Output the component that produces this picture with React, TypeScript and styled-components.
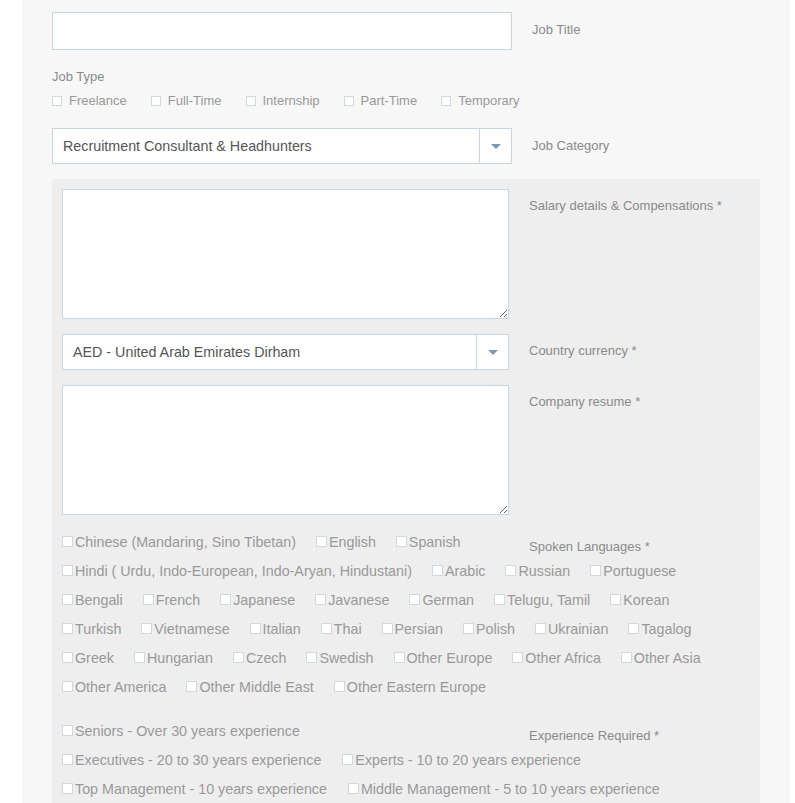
import styled, { createGlobalStyle } from "styled-components";

const GlobalStyle = createGlobalStyle`
    body {
        margin: 0;
        background: #ffffff;
        font-family: "Liberation Sans", Arial, sans-serif;
    }
`

const Page = styled.div`
    margin-left: 22px;
    width: 768px;
    min-height: 803px;
    background: #f7f7f7;
    padding: 12px 30px 0 30px;
    box-sizing: border-box;
`

const FieldRow = styled.div<{ $top?: number }>`
    display: grid;
    grid-template-columns: 460px 1fr;
    column-gap: 20px;
    align-items: center;
    margin-top: ${p => p.$top ?? 0}px;
`

const PanelRow = styled.div<{ $top?: number; $align?: string }>`
    display: grid;
    grid-template-columns: 447px 1fr;
    column-gap: 20px;
    align-items: ${p => p.$align ?? "center"};
    margin-top: ${p => p.$top ?? 0}px;
`

const SideLabel = styled.div<{ $pad?: number; $lift?: number }>`
    font-size: 13px;
    color: #8a8a8a;
    padding-top: ${p => p.$pad ?? 0}px;
    padding-bottom: ${p => p.$lift ?? 0}px;
`

const TextInput = styled.input`
    display: block;
    width: 100%;
    height: 38px;
    border: 1px solid #c8d6e1;
    background: #ffffff;
    box-sizing: border-box;
    outline: none;
`

const SelectBox = styled.div`
    display: flex;
    height: 36px;
    border: 1px solid #c8d6e1;
    background: #ffffff;
    box-sizing: border-box;
`

const SelectText = styled.div`
    flex: 1;
    display: flex;
    align-items: center;
    padding-left: 10px;
    font-size: 14.3px;
    color: #555555;
`

const SelectArrow = styled.div`
    width: 31px;
    border-left: 1px solid #c8d6e1;
    display: flex;
    align-items: center;
    justify-content: center;

    &::after {
        content: "";
        border-left: 5px solid transparent;
        border-right: 5px solid transparent;
        border-top: 5px solid #7b98b3;
    }
`

const Area = styled.textarea`
    display: block;
    width: 100%;
    height: 130px;
    border: 1px solid #c8d6e1;
    background: #ffffff;
    box-sizing: border-box;
    resize: vertical;
    outline: none;
`

const GroupTitle = styled.div`
    font-size: 13px;
    color: #8a8a8a;
    margin-top: 19px;
    line-height: 16px;
`

const TypeRow = styled.div`
    display: flex;
    gap: 24px;
    margin-top: 8px;
    line-height: 16px;
`

const TypeItem = styled.label`
    display: flex;
    align-items: center;
    gap: 7px;
    font-size: 13px;
    color: #999999;
`

const Box = styled.span<{ $size: number }>`
    display: inline-block;
    width: ${p => p.$size}px;
    height: ${p => p.$size}px;
    border: 1px solid #cfd9e2;
    background: #ffffff;
    box-sizing: border-box;
    flex-shrink: 0;
`

const Panel = styled.div`
    margin-top: 15px;
    background: #eeeeee;
    padding: 10px 10px 0 10px;
    min-height: 624px;
    box-sizing: border-box;
`

const ChoiceRow = styled.div<{ $gap?: number }>`
    display: flex;
    flex-wrap: nowrap;
    gap: ${p => p.$gap ?? 20}px;
    height: 29px;
    align-items: center;
`

const Choice = styled.label`
    display: flex;
    align-items: center;
    gap: 2px;
    font-size: 14.3px;
    color: #999999;
    white-space: nowrap;
`

const jobTypes = ["Freelance", "Full-Time", "Internship", "Part-Time", "Temporary"]

const langRows = [
    ["Hindi ( Urdu, Indo-European, Indo-Aryan, Hindustani)", "Arabic", "Russian", "Portuguese"],
    ["Bengali", "French", "Japanese", "Javanese", "German", "Telugu, Tamil", "Korean"],
    ["Turkish", "Vietnamese", "Italian", "Thai", "Persian", "Polish", "Ukrainian", "Tagalog"],
    ["Greek", "Hungarian", "Czech", "Swedish", "Other Europe", "Other Africa", "Other Asia"],
    ["Other America", "Other Middle East", "Other Eastern Europe"],
]

const expRows = [
    ["Executives - 20 to 30 years experience", "Experts - 10 to 20 years experience"],
    ["Top Management - 10 years experience", "Middle Management - 5 to 10 years experience"],
]

function renderRow(items: string[]) {
    return items.map(name => (
        <Choice key={name}>
            <Box $size={11} />
            {name}
        </Choice>
    ))
}

export default function App(): JSX.Element {
    return (
        <>
            <GlobalStyle />
            <Page>
                <FieldRow>
                    <TextInput />
                    <SideLabel $lift={4}>Job Title</SideLabel>
                </FieldRow>

                <GroupTitle>Job Type</GroupTitle>
                <TypeRow>
                    {jobTypes.map(t => (
                        <TypeItem key={t}>
                            <Box $size={10} />
                            {t}
                        </TypeItem>
                    ))}
                </TypeRow>

                <FieldRow $top={19}>
                    <SelectBox>
                        <SelectText>Recruitment Consultant &amp; Headhunters</SelectText>
                        <SelectArrow />
                    </SelectBox>
                    <SideLabel $lift={2}>Job Category</SideLabel>
                </FieldRow>

                <Panel>
                    <PanelRow $align="start">
                        <Area />
                        <SideLabel $pad={9}>Salary details &amp; Compensations *</SideLabel>
                    </PanelRow>

                    <PanelRow $top={15}>
                        <SelectBox>
                            <SelectText>AED - United Arab Emirates Dirham</SelectText>
                            <SelectArrow />
                        </SelectBox>
                        <SideLabel $lift={4}>Country currency *</SideLabel>
                    </PanelRow>

                    <PanelRow $top={15} $align="start">
                        <Area />
                        <SideLabel $pad={9}>Company resume *</SideLabel>
                    </PanelRow>

                    <PanelRow $top={12} $align="start">
                        <ChoiceRow>
                            {renderRow(["Chinese (Mandaring, Sino Tibetan)", "English", "Spanish"])}
                        </ChoiceRow>
                        <SideLabel $pad={12}>Spoken Languages *</SideLabel>
                    </PanelRow>
                    {langRows.map((row, i) => (
                        <ChoiceRow key={i}>{renderRow(row)}</ChoiceRow>
                    ))}

                    <PanelRow $top={15} $align="start">
                        <ChoiceRow>{renderRow(["Seniors - Over 30 years experience"])}</ChoiceRow>
                        <SideLabel $pad={12}>Experience Required *</SideLabel>
                    </PanelRow>
                    {expRows.map((row, i) => (
                        <ChoiceRow key={i} $gap={21}>{renderRow(row)}</ChoiceRow>
                    ))}
                </Panel>
            </Page>
        </>
    )
}
